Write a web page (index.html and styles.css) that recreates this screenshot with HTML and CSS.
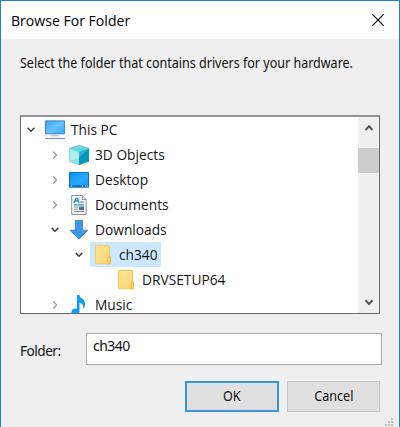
FILE: index.html
```html
<!DOCTYPE html>
<html lang="en">
<head>
<meta charset="utf-8">
<title>Browse For Folder</title>
<link rel="stylesheet" href="styles.css">
</head>
<body>
<svg width="0" height="0" class="defs">
  <defs>
    <linearGradient id="blue" x1="0" y1="0" x2="1" y2="1"><stop offset="0" stop-color="#37a9f8"/><stop offset=".5" stop-color="#68c1ff"/><stop offset="1" stop-color="#36a3f4"/></linearGradient>
    <linearGradient id="desk" x1="0" y1="0" x2="1" y2="1"><stop offset="0" stop-color="#0b95f7"/><stop offset=".6" stop-color="#2ba8ff"/><stop offset="1" stop-color="#1296f5"/></linearGradient>
    <linearGradient id="fold" x1="0" y1="0" x2="1" y2="1"><stop offset="0" stop-color="#ffe594"/><stop offset="1" stop-color="#f9d775"/></linearGradient>
    <symbol id="open" viewBox="0 0 10 10"><path d="M1.7 2.9 5 6.2l3.3-3.3" fill="none" stroke="#444" stroke-width="1.5"/></symbol>
    <symbol id="shut" viewBox="0 0 10 10"><path d="M3.2 1.5 6.6 5 3.2 8.5" fill="none" stroke="#a3a3a3" stroke-width="1.4"/></symbol>
    <symbol id="folder" viewBox="0 0 16 20"><path d="M.5.5h14v11l1 1v6.3H.5z" fill="url(#fold)" stroke="#efc95b"/><path d="M12.8 18.8v-6l1-1.3h.9l.8 1.3v6z" fill="#f8d36b" stroke="#e6b93f" stroke-width=".9"/></symbol>
  </defs>
</svg>
<main class="dialog">
  <header class="titlebar">
    <h1>Browse For Folder</h1>
    <svg class="close" width="12" height="12" viewBox="0 0 12 12"><path d="M.4.4l11.2 11.2M11.6.4.4 11.6" stroke="#000" stroke-width="1.15"/></svg>
  </header>
  <p class="prompt">Select the folder that contains drivers for your hardware.</p>
  <section class="tree">
    <div class="rows">
      <div class="row">
        <svg class="chev"><use href="#open"/></svg>
        <svg class="icon" viewBox="0 0 20 20"><path d="M.6.9h18.8v12.9H.6z" fill="url(#blue)" stroke="#3c83b8"/><path d="M8 14.3h4v1.8H8z" fill="#c9d4e0"/><path d="M5.5 15.8h9" stroke="#b2bfce"/><path d="M0 18.5h20" stroke="#8497b3" stroke-width="1.2"/></svg>
        <span class="label">This PC</span>
      </div>
      <div class="row l1">
        <svg class="chev"><use href="#shut"/></svg>
        <svg class="icon" viewBox="0 0 20 20"><path d="M10 0 20 3.2v13L10 20 0 16.5V3.2z" fill="#45c6d9"/><path d="M0 3.2 10 0l10 3.2L10 6.7z" fill="#6ad3e0"/><path d="M0 3.2 10 6.7V20L0 16.5z" fill="#8ce3e7"/><path d="M10 6.7 20 3.2v13L10 20z" fill="#25b9d1"/><path d="M10 13l10-9.8v13L10 20z" fill="#0798b9"/><path d="M1.5 5 10 7.7v5L1.5 16z" fill="#c2f1ee" opacity=".7"/></svg>
        <span class="label">3D Objects</span>
      </div>
      <div class="row l1">
        <svg class="chev"><use href="#shut"/></svg>
        <svg class="icon" viewBox="0 0 20 20"><path d="M.5 2.5h19v14.7H.5z" fill="url(#desk)" stroke="#0876c8"/><path d="M1 15.2h18v1.7H1z" fill="#0871bd"/><path d="M2 16h1.2m9.8 0h1m2 0h1m1 0h1" stroke="#e5f5ff" stroke-width="1.2"/></svg>
        <span class="label">Desktop</span>
      </div>
      <div class="row l1">
        <svg class="chev"><use href="#shut"/></svg>
        <svg class="icon" viewBox="0 0 20 20"><path d="M2.7.5h10.5l4 4v15H2.7z" fill="#f9fafb" stroke="#8d9297"/><path d="M13.2.5v4h4" fill="#e4e7ea" stroke="#8d9297"/><path d="M4.8 8 7.2 3.5h1.500L10 8M6 6h4" fill="none" stroke="#278dce" stroke-width="1.3"/><path d="M11 7h4M5 9.8h10" stroke="#278dce" stroke-width="1.2"/><path d="M5 12h4m-4 2.2h4m-4 2.3h10" stroke="#899096"/><path d="M10 11.5h5v3.6h-5z" fill="#606e78"/></svg>
        <span class="label">Documents</span>
      </div>
      <div class="row l1">
        <svg class="chev"><use href="#open"/></svg>
        <svg class="icon" viewBox="0 0 20 20"><path d="M6.3.5h7.2v9.7h5.3L10 19.2.9 10.2h5.4z" fill="#3b96e3" stroke="#2d82cf" stroke-width=".8"/></svg>
        <span class="label">Downloads</span>
      </div>
      <div class="row l2">
        <svg class="chev"><use href="#open"/></svg>
        <div class="selected"><svg class="folder"><use href="#folder"/></svg><span class="label">ch340</span></div>
      </div>
      <div class="row l3">
        <svg class="folder"><use href="#folder"/></svg><span class="label">DRVSETUP64</span>
      </div>
      <div class="row l1">
        <svg class="chev"><use href="#shut"/></svg>
        <svg class="icon" viewBox="0 0 20 20"><path d="M8 0h2.3c.3 3.2 5.8 4.2 5.8 8.8 0 2.5-1.1 4.2-2 5.2.8-3.7-.8-5.4-3.6-6.4V16c0 2-2.1 4-4.6 4S2.4 18.8 2.4 17s1.8-3.5 4.1-3.5c.6 0 1.1.1 1.500.2z" fill="#0c9cf7"/></svg>
        <span class="label">Music</span>
      </div>
    </div>
    <div class="scroll">
      <svg class="arrow" viewBox="0 0 10 10"><path d="M1.5 7 5 3.3 8.5 7" fill="none" stroke="#555" stroke-width="2"/></svg>
      <div class="thumb"></div>
      <svg class="arrow down" viewBox="0 0 10 10"><path d="M1.5 3.3 5 7l3.5-3.7" fill="none" stroke="#555" stroke-width="2"/></svg>
    </div>
  </section>
  <div class="field"><label for="folder-name">Folder:</label><input id="folder-name" value="ch340"></div>
  <footer class="buttons"><button class="ok"><span>OK</span></button><button class="cancel"><span>Cancel</span></button></footer>
  <svg class="grip" width="8" height="8" viewBox="0 0 8 8"><path d="M6 0h2v2H6zM3 3h2v2H3zM6 3h2v2H6zM0 6h2v2H0zM3 6h2v2H3zM6 6h2v2H6z" fill="#bdbdbd"/></svg>
</main>
</body>
</html>
```
FILE: styles.css
```css
* { box-sizing: border-box; }
body { margin: 0; overflow: hidden; }
.defs { position: absolute; }
.dialog {
  position: relative;
  height: 427px;
  border: 1px solid #1c80d3;
  border-bottom: 0;
  background: #efefef;
  color: #111;
  font-family: "Noto Sans", sans-serif;
}
.titlebar {
  display: flex;
  align-items: center;
  justify-content: space-between;
  height: 38px;
  padding: 0 15px 0 10px;
  background: #fff;
}
h1 { margin: 0; font: 400 15px/20px "Open Sans", sans-serif; color: #000; white-space: nowrap; transform: scaleX(.938); transform-origin: 0 50%; }
.prompt { width: max-content; height: 20px; margin: 14px 0 42px 19px; font-size: 13.6px; line-height: 20px; white-space: nowrap; transform: scaleX(.921); transform-origin: 0 50%; }
.tree {
  display: flex;
  justify-content: space-between;
  width: 360px;
  height: 199px;
  margin-left: 19px;
  border: 1px solid #696969;
  border-top: 2px solid #929292;
  background: #fff;
  overflow: hidden;
}
.rows { padding-left: 5px; }
.row { display: flex; align-items: center; height: 25px; }
.l1 { padding-left: 24px; }
.l2 { padding-left: 48px; }
.l3 { padding-left: 92px; }
.chev { width: 10px; height: 10px; flex: none; }
.icon { width: 20px; height: 20px; margin: 0 6px 0 9px; flex: none; }
.folder { width: 16px; height: 20px; margin-right: 8px; flex: none; }
.label { font: 400 15.2px/25px "Open Sans", sans-serif; color: #151515; white-space: nowrap; transform: scaleX(.905); transform-origin: 0 50%; }
.selected { display: flex; align-items: center; width: 71px; height: 25px; margin-left: 6px; padding-left: 5px; background: #cce8ff; }
.scroll { display: flex; flex-direction: column; align-items: center; width: 21px; background: #efefef; }
.arrow { width: 10px; height: 10px; margin: 6px 0 15px; }
.thumb { width: 21px; height: 25px; background: #cdcdcd; }
.down { margin: auto 0 6px; }
.field { display: flex; align-items: center; margin: 19px 0 0 19px; font-size: 13.6px; }
label { width: 66px; white-space: nowrap; padding-top: 2px; letter-spacing: -.5px; }
input {
  width: 296px;
  height: 32px;
  border: 1px solid #ababab;
  padding: 0 6px 7px;
  background: #fff;
  color: #111;
  font: 14px "Noto Sans", sans-serif;
  letter-spacing: -.55px;
}
.buttons { display: flex; gap: 8px; margin: 16px 0 0 184px; }
button { height: 31px; padding: 0; border: 1px solid #c6c6c6; border-radius: 0; background: #e0e0e0; color: #111; font: 14px "Noto Sans", sans-serif; }
button span { display: inline-block; transform: scaleX(.9); position: relative; top: -1px; }
.ok { width: 94px; border: 2px solid #3a94de; }
.cancel { width: 93px; }
.grip { position: absolute; right: 6px; bottom: 1px; }
```
